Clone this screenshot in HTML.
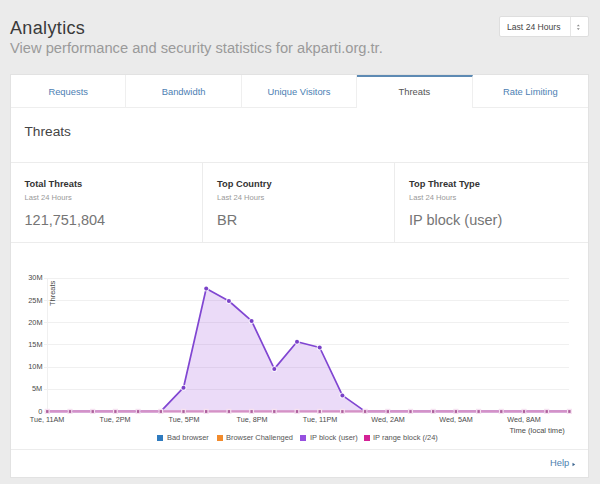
<!DOCTYPE html>
<html><head><meta charset="utf-8">
<style>
*{box-sizing:border-box;margin:0;padding:0}
html,body{width:600px;height:484px;overflow:hidden;background:#ebebeb;font-family:"Liberation Sans",sans-serif;position:relative}
.a{position:absolute;white-space:nowrap}
#h1{left:10px;top:16px;font-size:18px;color:#3a3a3a;line-height:24px;letter-spacing:0.35px}
#sub{left:10px;top:39px;font-size:14.7px;color:#9a9a9a;line-height:18px}
#sel{left:499px;top:16px;width:90px;height:21px;background:#fff;border:1px solid #dedede;border-radius:2px}
#sel .t{left:7px;top:4px;font-size:8.6px;color:#444;line-height:12px}
#sel .d{left:70px;top:0;width:1px;height:19px;background:#e6e6e6}
#panel{left:11px;top:75px;width:577px;height:402px;background:#fff;box-shadow:0 0 0 1px #e2e2e2}
.tab{top:0;height:33px;width:115.4px;border-right:1px solid #efefef;border-bottom:1px solid #eeeeee;text-align:center;font-size:9.4px;color:#4d80b3;line-height:33px}
.tab.act{border-bottom:none;border-top:2px solid #5d8ab3;color:#555;line-height:30px}
.hr{left:0;width:577px;height:1px;background:#ececec}
#th{left:13.5px;top:47.5px;font-size:13.7px;color:#444;line-height:18px}
.lab{font-size:9.3px;font-weight:bold;color:#333;line-height:12px}
.sm{font-size:7.6px;color:#999;line-height:10px}
.big{font-size:14.5px;color:#757575;line-height:18px}
.vd{top:88px;width:1px;height:79px;background:#ececec}
.ax{font-size:8px;color:#4a4a4a;line-height:9px}
.yl{right:557.8px;text-align:right;transform:scaleX(0.92);transform-origin:100% 0}
.xl{transform:translateX(-50%) scaleX(0.9)}
.leg{font-size:8px;color:#555;line-height:9px;transform:scaleX(0.93);transform-origin:0 0}
.sq{width:6px;height:6px}
</style></head><body>
<div id="h1" class="a">Analytics</div>
<div id="sub" class="a">View performance and security statistics for akparti.org.tr.</div>
<div id="sel" class="a"><div class="a t">Last 24 Hours</div><div class="a d"></div>
<svg class="a" style="left:75px;top:5px" width="8" height="10" viewBox="0 0 8 10"><path d="M1.8 4.2 L3.3 2.4 L4.8 4.2Z M1.8 6.2 L3.3 8 L4.8 6.2Z" fill="#8a8a8a"/></svg>
</div>

<div id="panel" class="a">
  <div class="a tab" style="left:0">Requests</div>
  <div class="a tab" style="left:115.4px">Bandwidth</div>
  <div class="a tab" style="left:230.8px">Unique Visitors</div>
  <div class="a tab act" style="left:346.2px">Threats</div>
  <div class="a tab" style="left:461.6px;border-right:none">Rate Limiting</div>

  <div id="th" class="a">Threats</div>
  <div class="a hr" style="top:87px"></div>

  <div class="a vd" style="left:191px"></div>
  <div class="a vd" style="left:383px"></div>

  <div class="a lab" style="left:13.5px;top:103px">Total Threats</div>
  <div class="a sm" style="left:13.5px;top:118px">Last 24 Hours</div>
  <div class="a big" style="left:13.5px;top:135.5px">121,751,804</div>

  <div class="a lab" style="left:206px;top:103px">Top Country</div>
  <div class="a sm" style="left:206px;top:118px">Last 24 Hours</div>
  <div class="a big" style="left:206px;top:135.5px">BR</div>

  <div class="a lab" style="left:398px;top:103px">Top Threat Type</div>
  <div class="a sm" style="left:398px;top:118px">Last 24 Hours</div>
  <div class="a big" style="left:398px;top:135.5px">IP block (user)</div>

  <div class="a hr" style="top:167px"></div>
  <div class="a hr" style="top:374px"></div>
</div>

<svg class="a" style="left:0;top:0" width="600" height="484" viewBox="0 0 600 484" id="chart">
  <g stroke="#f0f0f0" stroke-width="1">
    <line x1="44" y1="278.5" x2="569" y2="278.5"/>
    <line x1="44" y1="300.5" x2="569" y2="300.5"/>
    <line x1="44" y1="322.5" x2="569" y2="322.5"/>
    <line x1="44" y1="344.5" x2="569" y2="344.5"/>
    <line x1="44" y1="367.5" x2="569" y2="367.5"/>
    <line x1="44" y1="389.5" x2="569" y2="389.5"/>
    <line x1="44" y1="411.5" x2="569" y2="411.5"/>
    <line x1="47.5" y1="278" x2="47.5" y2="412"/>
  </g>
  <g id="series">
<path d="M47.3 411.4 L47.3 411.4 L70.0 411.4 L92.7 411.4 L115.4 411.4 L138.1 411.4 L160.8 411.4 L183.5 387.7 L206.2 288.5 L228.9 301.0 L251.6 320.9 L274.3 368.9 L297.0 341.7 L319.7 347.5 L342.4 395.4 L365.1 411.4 L387.8 411.4 L410.5 411.4 L433.2 411.4 L455.9 411.4 L478.6 411.4 L501.3 411.4 L524.0 411.4 L546.7 411.4 L569.4 411.4 L569.4 411.4 Z" fill="#9b4ddc" fill-opacity="0.2"/>
<path d="M47.3 411.4 L70.0 411.4 L92.7 411.4 L115.4 411.4 L138.1 411.4 L160.8 411.4 L183.5 387.7 L206.2 288.5 L228.9 301.0 L251.6 320.9 L274.3 368.9 L297.0 341.7 L319.7 347.5 L342.4 395.4 L365.1 411.4 L387.8 411.4 L410.5 411.4 L433.2 411.4 L455.9 411.4 L478.6 411.4 L501.3 411.4 L524.0 411.4 L546.7 411.4 L569.4 411.4" fill="none" stroke="#8046d2" stroke-width="1.7" stroke-linejoin="round"/>
<circle cx="183.5" cy="387.7" r="3" fill="#fff" fill-opacity="0.75"/>
<circle cx="183.5" cy="387.7" r="2" fill="#7a42c8"/>
<circle cx="206.2" cy="288.5" r="3" fill="#fff" fill-opacity="0.75"/>
<circle cx="206.2" cy="288.5" r="2" fill="#7a42c8"/>
<circle cx="228.9" cy="301.0" r="3" fill="#fff" fill-opacity="0.75"/>
<circle cx="228.9" cy="301.0" r="2" fill="#7a42c8"/>
<circle cx="251.6" cy="320.9" r="3" fill="#fff" fill-opacity="0.75"/>
<circle cx="251.6" cy="320.9" r="2" fill="#7a42c8"/>
<circle cx="274.3" cy="368.9" r="3" fill="#fff" fill-opacity="0.75"/>
<circle cx="274.3" cy="368.9" r="2" fill="#7a42c8"/>
<circle cx="297.0" cy="341.7" r="3" fill="#fff" fill-opacity="0.75"/>
<circle cx="297.0" cy="341.7" r="2" fill="#7a42c8"/>
<circle cx="319.7" cy="347.5" r="3" fill="#fff" fill-opacity="0.75"/>
<circle cx="319.7" cy="347.5" r="2" fill="#7a42c8"/>
<circle cx="342.4" cy="395.4" r="3" fill="#fff" fill-opacity="0.75"/>
<circle cx="342.4" cy="395.4" r="2" fill="#7a42c8"/>
<rect x="44.7" y="408.79999999999995" width="5.2" height="5.2" fill="#f6e2f1"/>
<rect x="67.4" y="408.79999999999995" width="5.2" height="5.2" fill="#f6e2f1"/>
<rect x="90.1" y="408.79999999999995" width="5.2" height="5.2" fill="#f6e2f1"/>
<rect x="112.8" y="408.79999999999995" width="5.2" height="5.2" fill="#f6e2f1"/>
<rect x="135.5" y="408.79999999999995" width="5.2" height="5.2" fill="#f6e2f1"/>
<rect x="158.2" y="408.79999999999995" width="5.2" height="5.2" fill="#f6e2f1"/>
<rect x="180.9" y="408.79999999999995" width="5.2" height="5.2" fill="#f6e2f1"/>
<rect x="203.6" y="408.79999999999995" width="5.2" height="5.2" fill="#f6e2f1"/>
<rect x="226.3" y="408.79999999999995" width="5.2" height="5.2" fill="#f6e2f1"/>
<rect x="249.0" y="408.79999999999995" width="5.2" height="5.2" fill="#f6e2f1"/>
<rect x="271.7" y="408.79999999999995" width="5.2" height="5.2" fill="#f6e2f1"/>
<rect x="294.4" y="408.79999999999995" width="5.2" height="5.2" fill="#f6e2f1"/>
<rect x="317.1" y="408.79999999999995" width="5.2" height="5.2" fill="#f6e2f1"/>
<rect x="339.8" y="408.79999999999995" width="5.2" height="5.2" fill="#f6e2f1"/>
<rect x="362.5" y="408.79999999999995" width="5.2" height="5.2" fill="#f6e2f1"/>
<rect x="385.2" y="408.79999999999995" width="5.2" height="5.2" fill="#f6e2f1"/>
<rect x="407.9" y="408.79999999999995" width="5.2" height="5.2" fill="#f6e2f1"/>
<rect x="430.6" y="408.79999999999995" width="5.2" height="5.2" fill="#f6e2f1"/>
<rect x="453.3" y="408.79999999999995" width="5.2" height="5.2" fill="#f6e2f1"/>
<rect x="476.0" y="408.79999999999995" width="5.2" height="5.2" fill="#f6e2f1"/>
<rect x="498.7" y="408.79999999999995" width="5.2" height="5.2" fill="#f6e2f1"/>
<rect x="521.4" y="408.79999999999995" width="5.2" height="5.2" fill="#f6e2f1"/>
<rect x="544.1" y="408.79999999999995" width="5.2" height="5.2" fill="#f6e2f1"/>
<rect x="566.8" y="408.79999999999995" width="5.2" height="5.2" fill="#f6e2f1"/>
<line x1="49.7" y1="411.4" x2="67.6" y2="411.4" stroke="#d592c6" stroke-width="2.4"/>
<line x1="72.4" y1="411.4" x2="90.3" y2="411.4" stroke="#d592c6" stroke-width="2.4"/>
<line x1="95.1" y1="411.4" x2="113.0" y2="411.4" stroke="#d592c6" stroke-width="2.4"/>
<line x1="117.8" y1="411.4" x2="135.7" y2="411.4" stroke="#d592c6" stroke-width="2.4"/>
<line x1="140.5" y1="411.4" x2="158.4" y2="411.4" stroke="#d592c6" stroke-width="2.4"/>
<line x1="163.2" y1="411.4" x2="181.1" y2="411.4" stroke="#d592c6" stroke-width="2.4"/>
<line x1="185.9" y1="411.4" x2="203.8" y2="411.4" stroke="#d592c6" stroke-width="2.4"/>
<line x1="208.6" y1="411.4" x2="226.5" y2="411.4" stroke="#d592c6" stroke-width="2.4"/>
<line x1="231.3" y1="411.4" x2="249.2" y2="411.4" stroke="#d592c6" stroke-width="2.4"/>
<line x1="254.0" y1="411.4" x2="271.9" y2="411.4" stroke="#d592c6" stroke-width="2.4"/>
<line x1="276.7" y1="411.4" x2="294.6" y2="411.4" stroke="#d592c6" stroke-width="2.4"/>
<line x1="299.4" y1="411.4" x2="317.3" y2="411.4" stroke="#d592c6" stroke-width="2.4"/>
<line x1="322.1" y1="411.4" x2="340.0" y2="411.4" stroke="#d592c6" stroke-width="2.4"/>
<line x1="344.8" y1="411.4" x2="362.7" y2="411.4" stroke="#d592c6" stroke-width="2.4"/>
<line x1="367.5" y1="411.4" x2="385.4" y2="411.4" stroke="#d592c6" stroke-width="2.4"/>
<line x1="390.2" y1="411.4" x2="408.1" y2="411.4" stroke="#d592c6" stroke-width="2.4"/>
<line x1="412.9" y1="411.4" x2="430.8" y2="411.4" stroke="#d592c6" stroke-width="2.4"/>
<line x1="435.6" y1="411.4" x2="453.5" y2="411.4" stroke="#d592c6" stroke-width="2.4"/>
<line x1="458.3" y1="411.4" x2="476.2" y2="411.4" stroke="#d592c6" stroke-width="2.4"/>
<line x1="481.0" y1="411.4" x2="498.9" y2="411.4" stroke="#d592c6" stroke-width="2.4"/>
<line x1="503.7" y1="411.4" x2="521.6" y2="411.4" stroke="#d592c6" stroke-width="2.4"/>
<line x1="526.4" y1="411.4" x2="544.3" y2="411.4" stroke="#d592c6" stroke-width="2.4"/>
<line x1="549.1" y1="411.4" x2="567.0" y2="411.4" stroke="#d592c6" stroke-width="2.4"/>
<rect x="46.1" y="410.09999999999997" width="2.4" height="2.8" fill="#ad5f9c"/>
<rect x="68.8" y="410.09999999999997" width="2.4" height="2.8" fill="#ad5f9c"/>
<rect x="91.5" y="410.09999999999997" width="2.4" height="2.8" fill="#ad5f9c"/>
<rect x="114.2" y="410.09999999999997" width="2.4" height="2.8" fill="#ad5f9c"/>
<rect x="136.9" y="410.09999999999997" width="2.4" height="2.8" fill="#ad5f9c"/>
<rect x="159.6" y="410.09999999999997" width="2.4" height="2.8" fill="#ad5f9c"/>
<rect x="182.3" y="410.09999999999997" width="2.4" height="2.8" fill="#ad5f9c"/>
<rect x="205.0" y="410.09999999999997" width="2.4" height="2.8" fill="#ad5f9c"/>
<rect x="227.7" y="410.09999999999997" width="2.4" height="2.8" fill="#ad5f9c"/>
<rect x="250.4" y="410.09999999999997" width="2.4" height="2.8" fill="#ad5f9c"/>
<rect x="273.1" y="410.09999999999997" width="2.4" height="2.8" fill="#ad5f9c"/>
<rect x="295.8" y="410.09999999999997" width="2.4" height="2.8" fill="#ad5f9c"/>
<rect x="318.5" y="410.09999999999997" width="2.4" height="2.8" fill="#ad5f9c"/>
<rect x="341.2" y="410.09999999999997" width="2.4" height="2.8" fill="#ad5f9c"/>
<rect x="363.9" y="410.09999999999997" width="2.4" height="2.8" fill="#ad5f9c"/>
<rect x="386.6" y="410.09999999999997" width="2.4" height="2.8" fill="#ad5f9c"/>
<rect x="409.3" y="410.09999999999997" width="2.4" height="2.8" fill="#ad5f9c"/>
<rect x="432.0" y="410.09999999999997" width="2.4" height="2.8" fill="#ad5f9c"/>
<rect x="454.7" y="410.09999999999997" width="2.4" height="2.8" fill="#ad5f9c"/>
<rect x="477.4" y="410.09999999999997" width="2.4" height="2.8" fill="#ad5f9c"/>
<rect x="500.1" y="410.09999999999997" width="2.4" height="2.8" fill="#ad5f9c"/>
<rect x="522.8" y="410.09999999999997" width="2.4" height="2.8" fill="#ad5f9c"/>
<rect x="545.5" y="410.09999999999997" width="2.4" height="2.8" fill="#ad5f9c"/>
<rect x="568.2" y="410.09999999999997" width="2.4" height="2.8" fill="#ad5f9c"/>
</g><!--/series-->
</svg>

<div class="a ax yl" style="top:273.3px">30M</div>
<div class="a ax yl" style="top:295.5px">25M</div>
<div class="a ax yl" style="top:317.7px">20M</div>
<div class="a ax yl" style="top:339.9px">15M</div>
<div class="a ax yl" style="top:362.1px">10M</div>
<div class="a ax yl" style="top:384.3px">5M</div>
<div class="a ax yl" style="top:406.5px">0</div>
<div class="a ax" style="left:48.1px;top:306.1px;transform:rotate(-90deg) scaleX(0.93);transform-origin:0 0">Threats</div>
<div class="a ax xl" style="left:47.3px;top:415px">Tue, 11AM</div>
<div class="a ax xl" style="left:115.4px;top:415px">Tue, 2PM</div>
<div class="a ax xl" style="left:183.5px;top:415px">Tue, 5PM</div>
<div class="a ax xl" style="left:251.6px;top:415px">Tue, 8PM</div>
<div class="a ax xl" style="left:319.7px;top:415px">Tue, 11PM</div>
<div class="a ax xl" style="left:387.8px;top:415px">Wed, 2AM</div>
<div class="a ax xl" style="left:455.9px;top:415px">Wed, 5AM</div>
<div class="a ax xl" style="left:524.0px;top:415px">Wed, 8AM</div>
<div class="a ax" style="right:34.9px;top:425.9px;transform:scaleX(0.94);transform-origin:100% 0">Time (local time)</div>
<div class="a sq" style="left:157px;top:434.7px;background:#2f7bbf"></div>
<div class="a leg" style="left:167.3px;top:433.4px">Bad browser</div>
<div class="a sq" style="left:217px;top:434.7px;background:#f28b2c"></div>
<div class="a leg" style="left:225.8px;top:433.4px">Browser Challenged</div>
<div class="a sq" style="left:300px;top:434.7px;background:#9650e0"></div>
<div class="a leg" style="left:310px;top:433.4px">IP block (user)</div>
<div class="a sq" style="left:364px;top:434.7px;background:#d42296"></div>
<div class="a leg" style="left:373.2px;top:433.4px">IP range block (/24)</div>

<div class="a" style="left:550px;top:457px;font-size:9.4px;color:#4d7fb0;line-height:12px">Help</div>
<svg class="a" style="left:572px;top:462px" width="5" height="5" viewBox="0 0 5 5"><path d="M0.5 0.8 L3.2 2.5 L0.5 4.2Z" fill="#3d6690"/></svg>
</body></html>
